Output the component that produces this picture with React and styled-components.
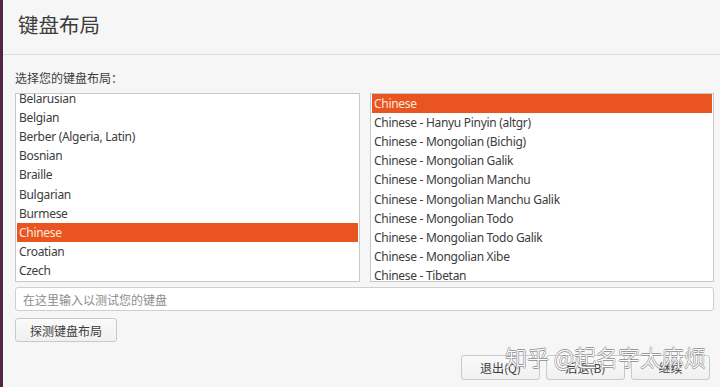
import React from "react";
import styled, { createGlobalStyle } from "styled-components";

const Global = createGlobalStyle`
  html, body { margin: 0; padding: 0; }
  body {
    width: 720px;
    height: 387px;
    overflow: hidden;
    background: #f6f6f6;
    font-family: "Noto Sans", "Noto Sans CJK SC", sans-serif;
    color: #3c3c3c;
  }
`;

const Window = styled.div`
  position: relative;
  display: flex;
  width: 720px;
  height: 387px;
  background: #f6f6f6;
`;

const Stripe = styled.div`
  width: 3px;
  flex: none;
  background: #4f2742;
`;

const Main = styled.div`
  flex: 1;
  display: flex;
  flex-direction: column;
  min-width: 0;
`;

const Header = styled.div`
  height: 55px;
  box-sizing: border-box;
  border-bottom: 1px solid #dcdcdc;
  display: flex;
  align-items: center;
  padding-left: 15px;
`;

const Title = styled.h1`
  margin: 0;
  font-family: "Noto Sans CJK SC", sans-serif;
  font-weight: 400;
  font-size: 20.5px;
  color: #3c3c3c;
  line-height: 1;
  transform: translateY(-3px);
`;

const Body = styled.div`
  flex: 1;
  display: flex;
  flex-direction: column;
  padding: 15px 6px 7px 12px;
`;

const Label = styled.div`
  font-family: "Noto Sans CJK SC", sans-serif;
  font-size: 12px;
  line-height: 16px;
  color: #3c3c3c;
  margin-bottom: 7px;
`;

const Lists = styled.div`
  display: grid;
  grid-template-columns: 345px 344px;
  column-gap: 10px;
`;

const List = styled.div`
  height: 189px;
  box-sizing: border-box;
  border: 1px solid #c8c8c8;
  background: #fff;
  overflow: hidden;
`;

const ListInner = styled.div`
  margin-top: ${(p) => p.$offset || 0}px;
  display: flex;
  flex-direction: column;
`;

const Row = styled.div`
  height: 19.1px;
  flex: none;
  display: flex;
  align-items: center;
  padding-left: ${(p) => (p.$selected ? 2 : 3)}px;
  margin: 0 ${(p) => (p.$selected ? 1 : 0)}px;
  font-family: "Noto Sans", sans-serif;
  font-size: 12px;
  letter-spacing: -0.3px;
  white-space: nowrap;
  background: ${(p) => (p.$selected ? "#e95420" : "transparent")};
  color: ${(p) => (p.$selected ? "#fde8df" : "#3c3c3c")};
`;

const Input = styled.div`
  margin-top: 5px;
  height: 24px;
  box-sizing: border-box;
  border: 1px solid #cfcfcf;
  border-radius: 3px;
  background: #fff;
  display: flex;
  align-items: center;
  padding-left: 7px;
  font-family: "Noto Sans CJK SC", sans-serif;
  font-size: 12px;
  color: #8c8c8c;
`;

const Button = styled.button`
  box-sizing: border-box;
  height: ${(p) => p.$h || 24}px;
  width: ${(p) => p.$w}px;
  border: 1px solid #c9c9c9;
  border-radius: 3px;
  background: linear-gradient(#fafafa, #f0f0f0);
  font-family: "Noto Sans CJK SC", sans-serif;
  font-size: 12px;
  color: #3c3c3c;
  padding: 0;
  display: flex;
  align-items: center;
  justify-content: center;
`;

const ToolRow = styled.div`
  margin-top: 7px;
  display: flex;
`;

const Footer = styled.div`
  margin-top: auto;
  display: flex;
  justify-content: flex-end;
  gap: 6px;
  padding-right: 4px;
`;

const Watermark = styled.div`
  position: absolute;
  left: 505px;
  top: 342px;
  font-family: "Noto Sans CJK SC", sans-serif;
  font-size: 22px;
  font-weight: 300;
  color: #ffffff;
  text-shadow: 0.7px 0 #9a9a9a, -0.7px 0 #9a9a9a, 0 0.7px #9a9a9a,
    0 -0.7px #9a9a9a;
  white-space: nowrap;
  pointer-events: none;
  line-height: 28px;
`;

const left = [
  "Belarusian",
  "Belgian",
  "Berber (Algeria, Latin)",
  "Bosnian",
  "Braille",
  "Bulgarian",
  "Burmese",
  "Chinese",
  "Croatian",
  "Czech",
];

const right = [
  "Chinese",
  "Chinese - Hanyu Pinyin (altgr)",
  "Chinese - Mongolian (Bichig)",
  "Chinese - Mongolian Galik",
  "Chinese - Mongolian Manchu",
  "Chinese - Mongolian Manchu Galik",
  "Chinese - Mongolian Todo",
  "Chinese - Mongolian Todo Galik",
  "Chinese - Mongolian Xibe",
  "Chinese - Tibetan",
];

export default function App() {
  return (
    <>
      <Global />
      <Window>
        <Stripe />
        <Main>
          <Header>
            <Title>键盘布局</Title>
          </Header>
          <Body>
            <Label>选择您的键盘布局：</Label>
            <Lists>
              <List>
                <ListInner $offset={-5}>
                  {left.map((t) => (
                    <Row key={t} $selected={t === "Chinese"}>
                      {t}
                    </Row>
                  ))}
                </ListInner>
              </List>
              <List>
                <ListInner $offset={0}>
                  {right.map((t, i) => (
                    <Row key={t} $selected={i === 0}>
                      {t}
                    </Row>
                  ))}
                </ListInner>
              </List>
            </Lists>
            <Input>在这里输入以测试您的键盘</Input>
            <ToolRow>
              <Button $w={102}>探测键盘布局</Button>
            </ToolRow>
            <Footer>
              <Button $w={79} $h={25}>退出(Q)</Button>
              <Button $w={79} $h={25}>后退(B)</Button>
              <Button $w={79} $h={25}>继续</Button>
            </Footer>
          </Body>
        </Main>
        <Watermark>知乎 @起名字太麻烦</Watermark>
      </Window>
    </>
  );
}
